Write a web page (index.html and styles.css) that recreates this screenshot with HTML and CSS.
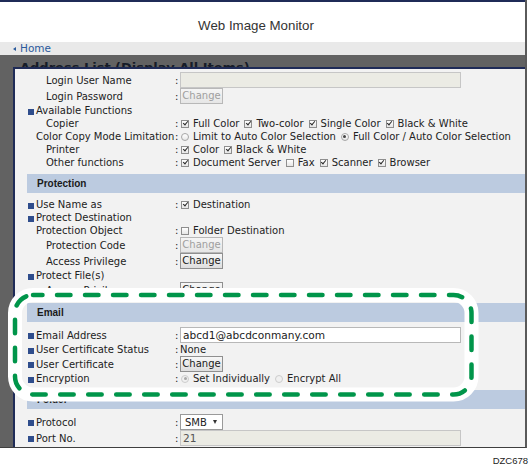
FILE: index.html
```html
<!DOCTYPE html>
<html lang="en">
<head>
<meta charset="utf-8">
<title>Web Image Monitor</title>
<link rel="stylesheet" href="styles.css">
</head>
<body>
<div class="frame">
  <header class="top"><h1 class="title">Web Image Monitor</h1></header>
  <nav class="homebar"><span class="tri"></span>Home</nav>
  <main class="backdrop">
    <h2 class="page-title">Address List (Display All Items)</h2>
    <section class="dialog">
      <div class="content">
        <div class="row tall"><div class="lbl l2">Login User Name</div><span class="colon">:</span><div class="val"><span class="field dis"></span></div></div>
        <div class="row tall"><div class="lbl l2">Login Password</div><span class="colon">:</span><div class="val"><span class="btn dis">Change</span></div></div>
        <div class="row"><div class="lbl l0"><span class="sq"></span>Available Functions</div></div>
        <div class="row"><div class="lbl l2">Copier</div><span class="colon">:</span><div class="val"><span class="opt"><span class="cb on"></span>Full Color</span><span class="opt"><span class="cb on"></span>Two-color</span><span class="opt"><span class="cb on"></span>Single Color</span><span class="opt"><span class="cb on"></span>Black &amp; White</span></div></div>
        <div class="row"><div class="lbl l1">Color Copy Mode Limitation</div><span class="colon">:</span><div class="val"><span class="opt"><span class="rd"></span>Limit to Auto Color Selection</span><span class="opt"><span class="rd on"></span>Full Color / Auto Color Selection</span></div></div>
        <div class="row"><div class="lbl l2">Printer</div><span class="colon">:</span><div class="val"><span class="opt"><span class="cb on"></span>Color</span><span class="opt"><span class="cb on"></span>Black &amp; White</span></div></div>
        <div class="row"><div class="lbl l2">Other functions</div><span class="colon">:</span><div class="val"><span class="opt"><span class="cb on"></span>Document Server</span><span class="opt"><span class="cb"></span>Fax</span><span class="opt"><span class="cb on"></span>Scanner</span><span class="opt"><span class="cb on"></span>Browser</span></div></div>

        <div class="sec">Protection</div>
        <div class="row"><div class="lbl l0"><span class="sq"></span>Use Name as</div><span class="colon">:</span><div class="val"><span class="opt"><span class="cb on"></span>Destination</span></div></div>
        <div class="row"><div class="lbl l0"><span class="sq"></span>Protect Destination</div></div>
        <div class="row"><div class="lbl l1">Protection Object</div><span class="colon">:</span><div class="val"><span class="opt"><span class="cb"></span>Folder Destination</span></div></div>
        <div class="row tall"><div class="lbl l2">Protection Code</div><span class="colon">:</span><div class="val"><span class="btn dis">Change</span></div></div>
        <div class="row tall"><div class="lbl l2">Access Privilege</div><span class="colon">:</span><div class="val"><span class="btn">Change</span></div></div>
        <div class="row"><div class="lbl l0"><span class="sq"></span>Protect File(s)</div></div>
        <div class="row tall"><div class="lbl l2">Access Privilege</div><span class="colon">:</span><div class="val"><span class="btn">Change</span></div></div>

        <div class="sec">Email</div>
        <div class="row tall"><div class="lbl l0"><span class="sq"></span>Email Address</div><span class="colon">:</span><div class="val"><span class="field txt">abcd1@abcdconmany.com</span></div></div>
        <div class="row"><div class="lbl l0"><span class="sq"></span>User Certificate Status</div><span class="colon">:</span><div class="val">None</div></div>
        <div class="row tall"><div class="lbl l0"><span class="sq"></span>User Certificate</div><span class="colon">:</span><div class="val"><span class="btn">Change</span></div></div>
        <div class="row"><div class="lbl l0"><span class="sq"></span>Encryption</div><span class="colon">:</span><div class="val"><span class="opt"><span class="rd on dim"></span>Set Individually</span><span class="opt"><span class="rd dim"></span>Encrypt All</span></div></div>

        <div class="sec">Folder</div>
        <div class="row tall"><div class="lbl l0"><span class="sq"></span>Protocol</div><span class="colon">:</span><div class="val"><span class="select">SMB<span class="arrow"></span></span></div></div>
        <div class="row tall"><div class="lbl l0"><span class="sq"></span>Port No.</div><span class="colon">:</span><div class="val"><span class="field dis txt grey">21</span></div></div>
      </div>
    </section>
  </main>
  <svg class="callout" width="525" height="447" viewBox="0 0 525 447">
    <rect x="15" y="295" width="456.5" height="99.5" rx="18" ry="18" fill="none" stroke="#ffffff" stroke-width="14"/>
    <rect x="15" y="295" width="456.5" height="99.5" rx="18" ry="18" fill="none" stroke="#00954a" stroke-width="4.5" stroke-linecap="round" stroke-dasharray="13.5 14.5" stroke-dashoffset="4"/>
  </svg>
</div>
<div class="code">DZC678</div>
</body>
</html>
```

FILE: styles.css
```css
html, body {
  margin: 0;
  padding: 0;
  background: #ffffff;
}

body {
  width: 530px;
  font-family: "DejaVu Sans", Verdana, sans-serif;
}

.frame {
  position: relative;
  width: 527px;
  height: 448px;
  box-sizing: border-box;
  border-right: 2px solid #5a5a5a;
  border-bottom: 1px solid #3f3f3f;
  display: flex;
  flex-direction: column;
  overflow: hidden;
}

.top {
  height: 40px;
  border-top: 2px solid #1f2b57;
  background: #ffffff;
  display: flex;
  align-items: center;
  justify-content: center;
  padding: 6px 13px 0 0;
  box-sizing: content-box;
  height: 34px;
}

.title {
  margin: 0;
  font-family: "Liberation Sans", Arial, sans-serif;
  font-weight: normal;
  font-size: 13.3px;
  color: #333333;
}

.homebar {
  height: 13px;
  line-height: 13px;
  background: #e9e9e9;
  padding-left: 13px;
  font-size: 10.5px;
  color: #2a5a9c;
  display: flex;
  align-items: center;
}

.tri {
  width: 0;
  height: 0;
  border-top: 2.5px solid transparent;
  border-bottom: 2.5px solid transparent;
  border-right: 3px solid #2a5a9c;
  margin-right: 4px;
}

.backdrop {
  position: relative;
  flex: 1;
  background: #626262;
  overflow: hidden;
}

.page-title {
  margin: 0;
  padding: 4.5px 0 0 20px;
  font-size: 13px;
  line-height: 15px;
  font-weight: bold;
  color: #161c28;
}

.dialog {
  position: absolute;
  left: 13px;
  top: 12px;
  right: 0;
  bottom: 0;
  border-top: 2px solid #1f2b57;
  border-left: 2px solid #1f2b57;
  background: #f2f2f2;
}

.content {
  padding: 3px 0 0 12px;
}

.row {
  display: grid;
  grid-template-columns: 148px 5px 1fr;
  height: 13px;
  line-height: 13px;
  align-items: center;
  font-size: 10px;
  color: #222222;
  white-space: nowrap;
}

.row.tall {
  height: 16px;
}

.lbl.l0 { padding-left: 1px; }
.lbl.l1 { padding-left: 9px; }
.lbl.l2 { padding-left: 19px; }

.sq {
  display: inline-block;
  width: 6px;
  height: 6px;
  margin-right: 2px;
  background: #2f4d8c;
  vertical-align: -0.5px;
}

.colon {
  line-height: 13px;
}

.val {
  display: flex;
  align-items: center;
  height: 100%;
}

.opt {
  display: inline-flex;
  align-items: center;
  margin-right: 4px;
}

.cb {
  position: relative;
  display: inline-block;
  box-sizing: border-box;
  width: 8px;
  height: 8px;
  margin: 0 4px 0 1px;
  border: 1px solid #8e8e8e;
  background: linear-gradient(#ffffff, #e6e6e6);
}

.cb.on::after {
  content: "";
  position: absolute;
  left: 1.5px;
  top: -0.5px;
  width: 2px;
  height: 4px;
  border: solid #2a2a2a;
  border-width: 0 1.4px 1.4px 0;
  transform: rotate(40deg);
}

.rd {
  position: relative;
  display: inline-block;
  box-sizing: border-box;
  width: 8px;
  height: 8px;
  margin: 0 4px 0 1px;
  border: 1px solid #a6a6a6;
  border-radius: 50%;
  background: linear-gradient(#ffffff, #e8e8e8);
}

.rd.on::after {
  content: "";
  position: absolute;
  left: 1.5px;
  top: 1.5px;
  width: 3px;
  height: 3px;
  border-radius: 50%;
  background: #444444;
}

.rd.dim {
  border-color: #cccccc;
  background: #f0f0f0;
}

.rd.dim.on::after {
  background: #a8a8a8;
}

.field {
  display: block;
  box-sizing: border-box;
  width: 281px;
  height: 16px;
  border: 1px solid #b8b8b8;
  background: #ffffff;
}

.field.dis {
  background: #ebebe4;
  border-color: #c6c6c6;
}

.field.txt {
  padding-left: 2px;
  font-size: 10.6px;
  line-height: 14px;
  color: #222222;
}

.field.grey {
  color: #555555;
}

.btn {
  display: inline-block;
  box-sizing: border-box;
  width: 43px;
  height: 16px;
  border: 1px solid #8f8f8f;
  background: linear-gradient(#f7f7f7, #dedede);
  font-size: 10px;
  line-height: 14px;
  text-align: center;
  color: #1a1a1a;
}

.btn.dis {
  color: #9f9f9f;
  border-color: #b8b8b8;
  background: linear-gradient(#f5f5f5, #e6e6e6);
}

.select {
  display: inline-flex;
  align-items: center;
  box-sizing: border-box;
  width: 43px;
  height: 16px;
  padding-left: 4px;
  border: 1px solid #9a9a9a;
  background: #ffffff;
  font-size: 10px;
  color: #222222;
}

.arrow {
  width: 0;
  height: 0;
  margin-left: 6px;
  border-left: 2.5px solid transparent;
  border-right: 2.5px solid transparent;
  border-top: 4px solid #333333;
}

.sec {
  height: 19px;
  line-height: 19px;
  margin: 5px 0;
  padding-left: 10px;
  background: #bccbe0;
  font-family: "Liberation Sans", Arial, sans-serif;
  font-weight: bold;
  font-size: 10px;
  color: #1a1a1a;
}

.callout {
  position: absolute;
  left: 0;
  top: 0;
  pointer-events: none;
}

.code {
  margin-top: 7px;
  width: 528px;
  text-align: right;
  font-family: "Liberation Sans", Arial, sans-serif;
  font-size: 9.5px;
  line-height: 11px;
  color: #222222;
}
```
